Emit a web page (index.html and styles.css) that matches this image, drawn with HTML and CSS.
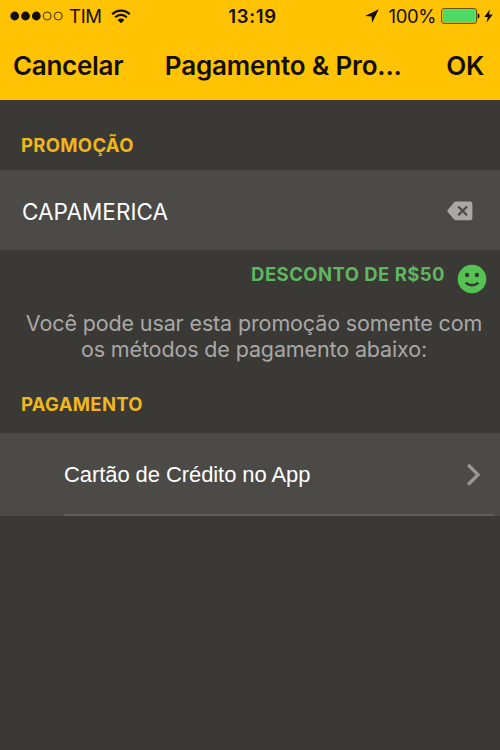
FILE: index.html
```html
<!DOCTYPE html>
<html lang="pt-BR">

<head>
    <meta charset="UTF-8">
    <title>Pagamento &amp; Promoção</title>
    <link rel="stylesheet" href="styles.css">
</head>

<body>
    <header class="header">
        <!-- Barra de status -->
        <div class="status-bar">
            <div class="status-left">
                <svg class="signal" width="54" height="12" viewBox="0 0 54 12">
                    <circle cx="4.7" cy="6" r="4.4"></circle>
                    <circle cx="15.5" cy="6" r="4.4"></circle>
                    <circle cx="26.3" cy="6" r="4.4"></circle>
                    <circle class="signal-empty" cx="37.2" cy="6" r="4"></circle>
                    <circle class="signal-empty" cx="48.2" cy="6" r="4"></circle>
                </svg>
                <span class="carrier">TIM</span>
                <svg class="wifi" width="20" height="15" viewBox="0 0 20 15">
                    <path d="M1.2 5.2a12.4 12.4 0 0 1 17.6 0M4.2 8.3a8.2 8.2 0 0 1 11.6 0"></path>
                    <path class="wifi-dot" d="M6.6 10.9a4.8 4.8 0 0 1 6.8 0L10 14.3z"></path>
                </svg>
            </div>
            <span class="clock">13:19</span>
            <div class="status-right">
                <svg class="location" width="14" height="14" viewBox="0 0 14 14">
                    <path d="M13.8 .2L0 7.1l6.6.4.5 6.3z"></path>
                </svg>
                <span class="percent">100%</span>
                <svg class="battery" width="39" height="16" viewBox="0 0 39 16">
                    <rect class="battery-case" x=".6" y=".6" width="35" height="14.8" rx="2.4"></rect>
                    <rect class="battery-level" x="1.8" y="1.8" width="32.6" height="12.4" rx="1.2"></rect>
                    <path d="M36.6 5.2q2 .8 2 2.8t-2 2.8z"></path>
                </svg>
                <svg class="bolt" width="9" height="14" viewBox="0 0 9 14">
                    <path d="M6 .3L.2 7.9h3.6L2.4 13.7 8.8 5.6H5z"></path>
                </svg>
            </div>
        </div>

        <nav class="nav-bar">
            <a class="nav-cancel">Cancelar</a>
            <h1 class="nav-title">Pagamento &amp; Pro...</h1>
            <a class="nav-ok">OK</a>
        </nav>
    </header>

    <main>
        <!-- Promoção -->
        <h2 class="section-title promo-title">PROMOÇÃO</h2>
        <div class="promo-field">
            <span class="promo-code">CAPAMERICA</span>
            <svg class="clear" width="26" height="20" viewBox="0 0 26 20">
                <path class="clear-shape" d="M9 .5h14a2.4 2.4 0 0 1 2.4 2.4v14a2.4 2.4 0 0 1-2.4 2.4H9q-1 0-1.8-.8L.9 11.3q-1-1.3 0-2.6l6.3-7.4Q8 .5 9 .5z"></path>
                <path class="clear-cross" d="M11.2 5.5l8.8 8.8M20 5.5l-8.8 8.8"></path>
            </svg>
        </div>
        <div class="discount">
            <span class="discount-text">DESCONTO DE R$50</span>
            <svg class="smile" width="30" height="30" viewBox="0 0 30 30">
                <circle class="smile-face" cx="15" cy="15" r="14.3"></circle>
                <circle class="smile-eye" cx="10.1" cy="11" r="2.2"></circle>
                <circle class="smile-eye" cx="19.9" cy="11" r="2.2"></circle>
                <path class="smile-mouth" d="M8.6 18.7q6.4 5 12.8 0"></path>
            </svg>
        </div>
        <p class="promo-info">
            <span class="info-first">Você pode usar esta promoção somente com</span><br>
            <span class="info-second">os métodos de pagamento abaixo:</span>
        </p>

        <!-- Pagamento -->
        <h2 class="section-title payment-title">PAGAMENTO</h2>
        <a class="payment-row">
            <span class="payment-name">Cartão de Crédito no App</span>
            <svg class="chevron" width="14" height="22" viewBox="0 0 14 22">
                <path d="M2.2 1.9l8.8 8.8-8.8 8.8"></path>
            </svg>
        </a>
    </main>
</body>

</html>
```

FILE: styles.css
```css
body {
    margin: 0;
    min-height: 750px;
    font-family: 'Inter', sans-serif;
    background-color: #3a3936;
    color: #fff;
}

svg {
    display: block;
    flex: none;
}

span,
h1,
h2,
a {
    white-space: nowrap;
}

.header {
    height: 100px;
    background-color: #ffc303;
    color: #140e02;
}

.header svg {
    fill: #140e02;
}

/* Barra de status */
.status-bar {
    display: grid;
    grid-template-columns: 1fr auto 1fr;
    align-items: center;
    height: 32px;
    padding: 0 7px 0 10px;
    font-size: 18.5px;
}

.status-left,
.status-right {
    display: flex;
    align-items: center;
}

.status-right {
    justify-content: flex-end;
}

.header .signal-empty {
    fill: none;
    stroke: #140e02;
    stroke-width: 0.8;
}

.carrier {
    margin-left: 5px;
    letter-spacing: -0.3px;
}

.wifi {
    margin-left: 9px;
}

.header .wifi path {
    fill: none;
    stroke: #140e02;
    stroke-width: 2.2;
}

.header .wifi .wifi-dot {
    fill: #140e02;
    stroke: none;
}

.clock {
    padding-left: 2px;
    font-weight: 600;
    letter-spacing: 0.7px;
}

.percent {
    margin-left: 10px;
    letter-spacing: -0.4px;
}

.battery {
    margin-left: 5px;
}

.header .battery-case {
    fill: none;
    stroke: #59450c;
    stroke-width: 1;
}

.header .battery-level {
    fill: #4cd964;
}

.bolt {
    margin-left: 4px;
}

/* Barra de navegação */
.nav-bar {
    display: flex;
    align-items: center;
    justify-content: space-between;
    height: 66px;
    padding: 0 16px 0 13px;
    font-size: 26px;
    font-weight: 600;
    letter-spacing: -0.3px;
}

.nav-title {
    margin: 0 3px 0 0;
    font-size: 26px;
    font-weight: 600;
    letter-spacing: -0.15px;
}

.section-title {
    margin: 0;
    padding-left: 21px;
    font-size: 18.5px;
    font-weight: 650;
    letter-spacing: 0.3px;
    color: #efb71e;
}

.promo-title {
    height: 70px;
    line-height: 90px;
}

.promo-field {
    display: flex;
    align-items: center;
    justify-content: space-between;
    height: 80px;
    padding: 0 27px 0 22px;
    background-color: #4b4a47;
}

.promo-code {
    padding-top: 2px;
    font-size: 22.5px;
    letter-spacing: 0.05px;
}

.clear {
    margin-top: 2px;
}

.clear-shape {
    fill: #a9a8a6;
}

.clear-cross {
    fill: none;
    stroke: #4b4a47;
    stroke-width: 2.3;
}

/* Desconto aplicado */
.discount {
    display: flex;
    justify-content: flex-end;
    height: 60px;
    padding-right: 13px;
}

.discount-text {
    margin-right: 12px;
    font-size: 18.5px;
    font-weight: 650;
    line-height: 49px;
    letter-spacing: 0.45px;
    color: #5fb760;
}

.smile {
    margin-top: 14px;
}

.smile-face {
    fill: #54c354;
}

.smile-eye {
    fill: #3a3936;
}

.smile-mouth {
    fill: none;
    stroke: #3a3936;
    stroke-width: 2.5;
}

.promo-info {
    margin: 0;
    padding: 0 6px 0 14px;
    font-size: 21.5px;
    line-height: 26px;
    letter-spacing: -0.13px;
    text-align: center;
    color: #a9a8a6;
}

/* Forma de pagamento */
.payment-title {
    height: 71px;
    line-height: 84px;
}

.payment-row {
    display: flex;
    align-items: center;
    justify-content: space-between;
    height: 83px;
    padding: 0 19px 0 64px;
    background: linear-gradient(#5f5e5b, #5f5e5b) 64px 81px / 430px 2px no-repeat #4b4a47;
}

.payment-name {
    font-family: 'Liberation Sans', sans-serif;
    font-size: 22px;
    letter-spacing: -0.08px;
}

.chevron path {
    fill: none;
    stroke: #989795;
    stroke-width: 3.4;
    stroke-linecap: round;
}
```
